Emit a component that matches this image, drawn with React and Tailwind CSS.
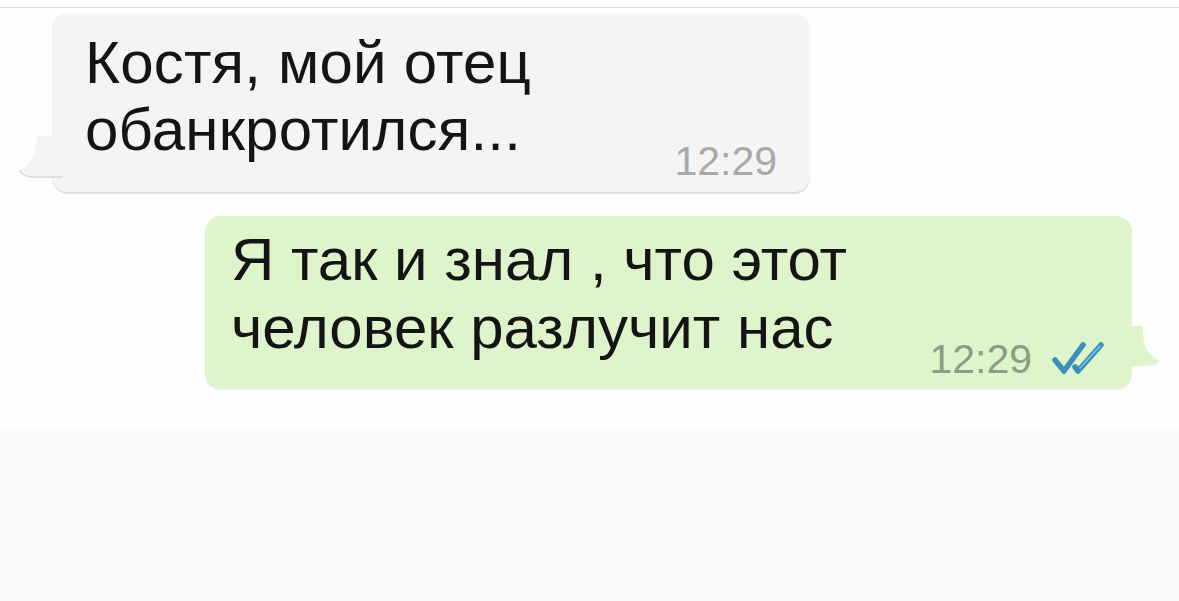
import React from 'react';

const font = { fontFamily: '"Liberation Sans", Arial, sans-serif' };

const DoubleCheck = () => (
  <svg width="56" height="34" viewBox="0 0 56 34" fill="none" className="mb-[5px]">
    <path d="M3 19 L12 30 L31 4" stroke="#3e8ebc" strokeWidth="5.5" strokeLinecap="round" strokeLinejoin="round" />
    <path d="M23 26 L26 30 L49 4" stroke="#3e8ebc" strokeWidth="5.5" strokeLinecap="round" strokeLinejoin="round" />
    <path d="M28 27 L48 5" stroke="#9ad8f2" strokeWidth="1.5" strokeLinecap="round" opacity="0.7" />
  </svg>
);

export default function App() {
  return (
    <div className="min-h-screen w-full bg-[#fafafa]" style={font}>
      <div className="h-[7px] bg-white" />
      <div className="h-[1px] bg-[#dadada]" />
      <div className="bg-[#fefefe] pb-[42px]">
        <div className="pl-[52px] pt-[5px]">
          <div className="relative w-[758px] h-[179px] rounded-[16px] bg-[#f4f4f4] shadow-[0_2px_1px_rgba(0,0,0,0.13)] flex items-end justify-between pl-[33px] pr-[33px] pt-[16px] pb-[10px]">
            <svg className="absolute left-[-33px] bottom-[12px]" width="44" height="44" viewBox="0 0 44 44">
              <path d="M44 0 L44 40 L14 40 C6 40 1 37 1 34 C7 32 13 27 16 16 L18 0 Z" fill="#f4f4f4" />
              <path d="M1 34 C1 37 6 41 14 41 L44 41" stroke="#d6d6d6" strokeWidth="1.5" fill="none" />
            </svg>
            <div className="relative self-start text-[60px] leading-[67px] tracking-[0.2px] text-[#141414]">
              <div>Костя, мой отец</div>
              <div>обанкротился...</div>
            </div>
            <div className="relative text-[41px] leading-none text-[#a9a9a9]">12:29</div>
          </div>
        </div>
        <div className="pl-[205px] pt-[24px]">
          <div className="relative w-[927px] h-[172px] rounded-[16px] bg-[#def5cc] shadow-[0_2px_1px_rgba(0,0,0,0.08)] flex items-end justify-between pl-[26px] pr-[24px] pt-[10px] pb-[8px]">
            <svg className="absolute right-[-28px] bottom-[18px]" width="44" height="44" viewBox="0 0 44 44">
              <path d="M0 0 L0 40 L30 40 C38 40 43 37 43 34 C37 32 31 27 28 16 L26 0 Z" fill="#def5cc" />
            </svg>
            <div className="relative self-start text-[60px] leading-[68px] text-[#141414]">
              <div>Я так и знал , что этот</div>
              <div>человек разлучит нас</div>
            </div>
            <div className="relative flex items-end gap-[20px]">
              <span className="text-[41px] leading-none text-[#8d9d85]">12:29</span>
              <DoubleCheck />
            </div>
          </div>
        </div>
      </div>
    </div>
  );
}
